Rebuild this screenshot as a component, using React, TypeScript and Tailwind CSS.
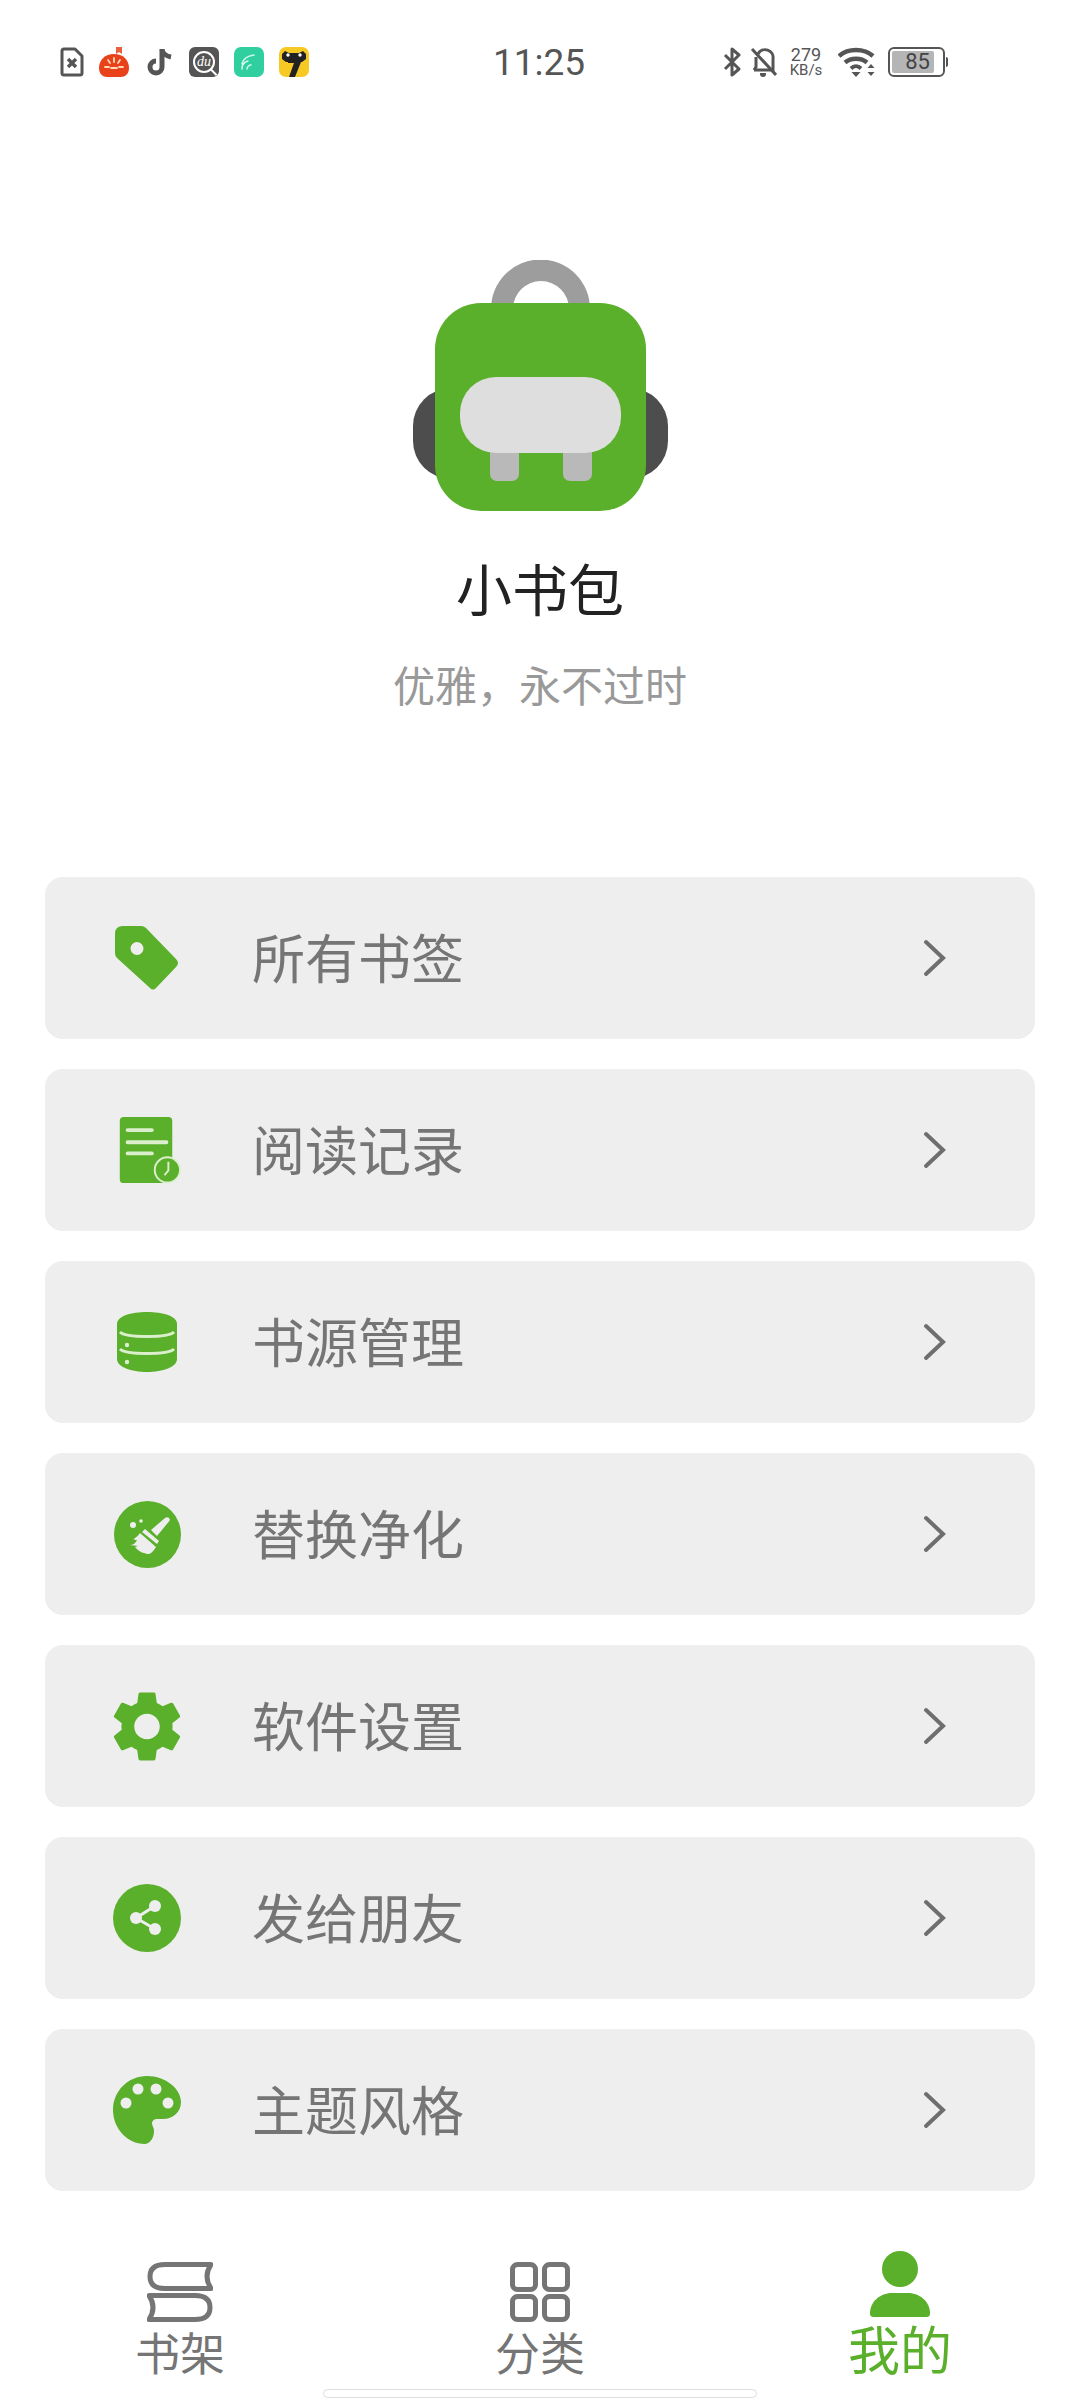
import type { ReactNode } from 'react'

const GREEN = '#5aaf2b'
const ROW = '#eeeeee'

function FileIcon() {
  return (
    <svg width="24" height="30" viewBox="0 0 24 30" fill="none">
      <path d="M2 4a2 2 0 0 1 2-2h11l7 7v17a2 2 0 0 1-2 2H4a2 2 0 0 1-2-2z" stroke="#555" strokeWidth="3" strokeLinejoin="round" />
      <path d="M8 12l8 8M16 12l-8 8" stroke="#555" strokeWidth="3.400" />
    </svg>
  )
}

function BunIcon() {
  return (
    <svg width="30" height="30" viewBox="0 0 30 30">
      <path d="M17 0h6v7l-3-2-3 2z" fill="#e8603c" />
      <path d="M15 7c9 0 15 6 15 14 0 6-4 9-8 9H8c-4 0-8-3-8-9C0 13 6 7 15 7z" fill="#e9421a" />
      <path d="M15 11v4M9 13l2 3M21 13l-2 3M6 20h4M20 20h4M12 21h6" stroke="#ffd9b8" strokeWidth="1.800" strokeLinecap="round" />
    </svg>
  )
}

function NoteIcon() {
  return (
    <svg width="26" height="30" viewBox="0 0 26 30" fill="none">
      <path d="M15 2v18a6 6 0 1 1-6-6" stroke="#555" strokeWidth="5" />
      <path d="M15 3c1 4 4 6 9 7" stroke="#555" strokeWidth="5" />
    </svg>
  )
}

function DuIcon() {
  return (
    <div className="relative flex h-[30px] w-[30px] items-center justify-center rounded-[6px] bg-[#555555]">
      <div className="flex h-[22px] w-[22px] items-center justify-center rounded-full border-2 border-white bg-[#555555]">
        <span className="text-[14px] italic leading-none text-white [font-family:'Liberation_Serif',serif]">du</span>
      </div>
      <div className="absolute bottom-[4px] right-[1px] h-[2px] w-[9px] rotate-45 bg-white" />
    </div>
  )
}

function SignalAppIcon() {
  return (
    <svg width="30" height="30" viewBox="0 0 30 30" fill="none">
      <rect width="30" height="30" rx="7" fill="#2fcf9f" />
      <path d="M8 22c0-4 2-7 6-8M8 17c1-5 5-8 12-9M13 22c0-2 2-4 4-4" stroke="#d6f7ec" strokeWidth="1.500" strokeLinecap="round" />
    </svg>
  )
}

function CatAppIcon() {
  return (
    <svg width="30" height="30" viewBox="0 0 30 30">
      <rect width="30" height="30" rx="7" fill="#f7c924" />
      <path d="M3 7l3-3 4 2h10l4-2 3 3v5l-4 3H7l-4-3z" fill="#222" />
      <path d="M9 10h15l-8 20h-6l5-14H9z" fill="#222" />
      <circle cx="9" cy="8" r="1.700" fill="#fff" />
      <circle cx="21" cy="8" r="1.700" fill="#fff" />
    </svg>
  )
}

function Bluetooth() {
  return (
    <svg width="19" height="30" viewBox="0 0 19 30" fill="none">
      <path d="M2 8l14 14-7 6V2l7 6L2 22" stroke="#555" strokeWidth="3" strokeLinejoin="round" />
    </svg>
  )
}

function BellOff() {
  return (
    <svg width="27" height="30" viewBox="0 0 27 30" fill="none">
      <path d="M8 7a8 8 0 0 1 15 5v11H4h15" stroke="#555" strokeWidth="3" />
      <path d="M2 2l24 26" stroke="#555" strokeWidth="3" />
      <path d="M10 26h6v1a3 3 0 0 1-6 0z" fill="#555" />
      <path d="M6 10v10l-2 3" stroke="#555" strokeWidth="3" />
    </svg>
  )
}

function Wifi() {
  return (
    <svg width="39" height="30" viewBox="0 0 39 30" fill="none">
      <path d="M1 9c9-8 25-8 34 0" stroke="#555" strokeWidth="4.500" />
      <path d="M7 15.500c6-5 16-5 22 0" stroke="#555" strokeWidth="4.500" />
      <path d="M13 21.500c3-3 7-3 10 0" stroke="#555" strokeWidth="4" />
      <path d="M13.500 25h9l-4.500 5z" fill="#555" />
      <path d="M33 17l3.500 4h-7zM33 29l3.500-4h-7z" fill="#555" />
    </svg>
  )
}

function Battery() {
  return (
    <div className="flex items-center">
      <div className="relative h-[30px] w-[57px] rounded-[6px] border-[2px] border-[#555555] p-[2px]">
        <div className="h-full w-[42px] rounded-[2px] bg-[#b5b5b5]" />
        <span className="absolute inset-0 flex items-center justify-center pl-[2px] text-[22px] leading-none text-[#444444] [font-family:Roboto,sans-serif]">85</span>
      </div>
      <div className="ml-[1px] h-[10px] w-[2px] rounded-r-sm bg-[#555555]" />
    </div>
  )
}

function StatusBar() {
  return (
    <div className="flex h-[124px] items-center pl-[60px] [font-family:Roboto,sans-serif]">
      <div className="flex w-[433px] items-center">
        <div className="mr-[15px]"><FileIcon /></div>
        <div className="mr-[18px]"><BunIcon /></div>
        <div className="mr-[16px]"><NoteIcon /></div>
        <div className="mr-[15px]"><DuIcon /></div>
        <div className="mr-[15px]"><SignalAppIcon /></div>
        <CatAppIcon />
      </div>
      <div className="w-[230px] text-[37px] leading-none text-[#555555]">11:25</div>
      <div className="flex items-center">
        <div className="mr-[8px]"><Bluetooth /></div>
        <div className="mr-[12px]"><BellOff /></div>
        <div className="mr-[15px] flex w-[34px] flex-col items-center text-[#555555]">
          <span className="text-[18px] leading-[17px]">279</span>
          <span className="text-[15px] leading-[15px]">KB/s</span>
        </div>
        <div className="mr-[11px]"><Wifi /></div>
        <Battery />
      </div>
    </div>
  )
}

function BagLogo() {
  return (
    <svg width="255" height="251" viewBox="412 260 255 251" className="mx-auto block">
      <rect x="412" y="388" width="255" height="91" rx="38" fill="#4d4d4d" />
      <path d="M490 310v-1a49.500 49.500 0 0 1 99 0v1h-21v-1a28 28 0 0 0-56 0v1z" fill="#9d9d9d" />
      <rect x="434" y="303" width="211" height="208" rx="46" fill={GREEN} />
      <rect x="489" y="440" width="29" height="41" rx="7" fill="#b9b9b9" />
      <rect x="562" y="440" width="29" height="41" rx="7" fill="#b9b9b9" />
      <rect x="459" y="377" width="161" height="76" rx="36" fill="#dedede" />
    </svg>
  )
}

function TagIcon() {
  return (
    <svg width="64" height="65" viewBox="0 0 64 65">
      <path d="M8 0H26Q29 0 31 2L61 33Q65 37 61 41L41 62Q38 65 35 62L2 32Q0 30 0 27V8Q0 0 8 0Z" fill={GREEN} />
      <ellipse cx="22" cy="22.500" rx="6.500" ry="6.500" fill={ROW} />
    </svg>
  )
}

function RecordIcon() {
  return (
    <svg width="70" height="68" viewBox="-7 0 70 68">
      <rect x="0" y="0" width="54" height="68" rx="4" fill={GREEN} />
      <path d="M8 13.500H33M8 26H48M8 37.500H33" stroke="#dcefcd" strokeWidth="4" strokeLinecap="round" />
      <circle cx="49" cy="54.500" r="13" fill={GREEN} stroke="#dcefcd" strokeWidth="2" />
      <path d="M50 46v9l-4 5" stroke="#dcefcd" strokeWidth="2" fill="none" />
    </svg>
  )
}

function DatabaseIcon() {
  return (
    <svg width="60" height="60" viewBox="0 0 60 60">
      <path d="M0 12C0 4 14 0 30 0s30 4 30 12v35c0 8-14 13-30 13S0 55 0 47z" fill={GREEN} />
      <path d="M3 20c6 6 48 6 54 0M3 37c6 6 48 6 54 0" stroke="#dcefcd" strokeWidth="3" fill="none" />
      <circle cx="10" cy="33" r="2.200" fill="#dcefcd" />
      <circle cx="10" cy="50" r="2.200" fill="#dcefcd" />
    </svg>
  )
}

function BrushIcon() {
  return (
    <svg width="67" height="67" viewBox="0 0 67 67">
      <circle cx="33.500" cy="33.500" r="33.500" fill={GREEN} />
      <path d="M37 29l14-12c1.500-1 3-1 4 0s1 3-.5 4L43 35z" fill={ROW} />
      <path d="M31 28l14 12-2 3-15-12z" fill={ROW} />
      <path d="M26 32l16 14c-2 3-4 6-7 7-4 0-10-2-14-7l3-1-8-1c3 0 6-2 7-5-1 0-2 0-4-1 1 0 4-2 7-6z" fill={ROW} />
      <circle cx="19" cy="24" r="3" fill={ROW} />
      <circle cx="27" cy="20" r="1.800" fill={ROW} />
    </svg>
  )
}

function GearIcon() {
  return (
    <svg width="68" height="71" viewBox="2.600 2 18.800 20">
      <path
        fillRule="evenodd"
        fill={GREEN}
        d="M19.140 12.940c.04-.3.06-.61.06-.94 0-.32-.02-.64-.07-.94l2.030-1.580c.18-.14.23-.41.12-.61l-1.920-3.320c-.12-.22-.37-.29-.59-.22l-2.390.96c-.5-.38-1.030-.7-1.620-.94l-.36-2.540c-.04-.24-.24-.41-.48-.41h-3.840c-.24 0-.43.17-.47.41l-.36 2.540c-.59.24-1.130.57-1.620.94l-2.390-.96c-.22-.08-.47 0-.59.22L2.740 8.870c-.12.21-.08.47.12.61l2.030 1.580c-.05.3-.09.63-.09.94s.02.64.07.94l-2.030 1.580c-.18.14-.23.41-.12.61l1.920 3.320c.12.22.37.29.59.22l2.390-.96c.5.38 1.030.7 1.620.94l.36 2.540c.05.24.24.41.48.41h3.840c.24 0 .44-.17.47-.41l.36-2.540c.59-.24 1.130-.56 1.620-.94l2.390.96c.22.08.47 0 .59-.22l1.920-3.320c.12-.22.07-.47-.12-.61l-2.010-1.580zM12 15.600c-1.980 0-3.600-1.620-3.600-3.600s1.620-3.600 3.600-3.600 3.600 1.620 3.600 3.600-1.620 3.600-3.600 3.600z"
      />
    </svg>
  )
}

function ShareIcon() {
  return (
    <svg width="68" height="68" viewBox="0 0 68 68">
      <circle cx="34" cy="34" r="34" fill={GREEN} />
      <path d="M42 22L23 34l19 11" stroke={ROW} strokeWidth="3" fill="none" />
      <circle cx="42" cy="22" r="6" fill={ROW} />
      <circle cx="23" cy="34" r="6" fill={ROW} />
      <circle cx="42" cy="45" r="6" fill={ROW} />
    </svg>
  )
}

function PaletteIcon() {
  return (
    <svg width="68" height="68" viewBox="0 0 68 68">
      <path d="M34 0C53 0 68 13 68 26c0 10-8 17-18 17h-6c-3 0-5 2-5 4 0 3 2 4 2 8 0 6-3 12-9 13C14 68 0 52 0 34 0 15 15 0 34 0z" fill={GREEN} />
      <circle cx="13" cy="27" r="5.500" fill={ROW} />
      <circle cx="25" cy="13" r="5.500" fill={ROW} />
      <circle cx="43" cy="13" r="5.500" fill={ROW} />
      <circle cx="55" cy="27" r="5.500" fill={ROW} />
    </svg>
  )
}

const rows: { label: string; icon: ReactNode }[] = [
  { label: '所有书签', icon: <TagIcon /> },
  { label: '阅读记录', icon: <RecordIcon /> },
  { label: '书源管理', icon: <DatabaseIcon /> },
  { label: '替换净化', icon: <BrushIcon /> },
  { label: '软件设置', icon: <GearIcon /> },
  { label: '发给朋友', icon: <ShareIcon /> },
  { label: '主题风格', icon: <PaletteIcon /> },
]

function MenuRow({ label, icon }: { label: string; icon: ReactNode }) {
  return (
    <div className="flex h-[162px] items-center rounded-[18px] bg-[#eeeeee] pl-[68px] pr-[88px]">
      <div className="flex w-[68px] justify-center">{icon}</div>
      <span className="ml-[71px] flex-1 pb-[3px] text-[53px] leading-none text-[#757575]">{label}</span>
      <svg width="24" height="38" viewBox="0 0 24 38" fill="none">
        <path d="M3 3l17 16L3 35" stroke="#6e6e6e" strokeWidth="4" strokeLinecap="round" strokeLinejoin="miter" />
      </svg>
    </div>
  )
}

function ShelfIcon() {
  return (
    <svg width="66" height="60" viewBox="0 0 66 60" fill="none">
      <path d="M64 2.500H18Q3 2.500 3 14.500Q3 26.500 18 26.500H64Q56 14.500 64 2.500Z" stroke="#757575" strokeWidth="5" strokeLinejoin="round" />
      <path d="M2 33.500H48Q63 33.500 63 45.500Q63 57.500 48 57.500H2Q10 45.500 2 33.500Z" stroke="#757575" strokeWidth="5" strokeLinejoin="round" />
    </svg>
  )
}

function GridIcon() {
  return (
    <svg width="60" height="60" viewBox="0 0 60 60" fill="none">
      <rect x="2.500" y="2.500" width="23" height="25" rx="5" stroke="#757575" strokeWidth="5" />
      <rect x="34.500" y="2.500" width="23" height="25" rx="5" stroke="#757575" strokeWidth="5" />
      <rect x="2.500" y="34.500" width="23" height="23" rx="5" stroke="#757575" strokeWidth="5" />
      <rect x="34.500" y="34.500" width="23" height="23" rx="5" stroke="#757575" strokeWidth="5" />
    </svg>
  )
}

function PersonIcon() {
  return (
    <svg width="60" height="66" viewBox="0 0 60 66">
      <ellipse cx="30" cy="18" rx="18" ry="18" fill={GREEN} />
      <path d="M0 62C0 51 10 42 22 42h16c12 0 22 9 22 20 0 3-1 4-4 4H4c-3 0-4-1-4-4z" fill={GREEN} />
    </svg>
  )
}

function BottomNav() {
  return (
    <div className="mt-[60px] grid h-[128px] grid-cols-3">
      <div className="flex flex-col items-center justify-end pb-[3px]">
        <ShelfIcon />
        <span className="mt-[6px] text-[45px] leading-[48px] text-[#757575]">书架</span>
      </div>
      <div className="flex flex-col items-center justify-end pb-[3px]">
        <GridIcon />
        <span className="mt-[6px] text-[45px] leading-[48px] text-[#757575]">分类</span>
      </div>
      <div className="flex flex-col items-center justify-end pb-[4px]">
        <PersonIcon />
        <span className="mt-[4px] text-[52px] leading-[54px] text-[#5aaf2b]">我的</span>
      </div>
    </div>
  )
}

export default function App() {
  return (
    <div className="h-[2400px] w-[1080px] overflow-hidden bg-white [font-family:'Noto_Sans_CJK_SC',sans-serif]">
      <StatusBar />
      <div className="mt-[136px]">
        <BagLogo />
      </div>
      <div className="mt-[48px] text-center text-[56px] leading-[56px] text-[#222222]">小书包</div>
      <div className="mt-[48px] text-center text-[42px] leading-[42px] text-[#999999]">优雅，永不过时</div>
      <div className="mx-[45px] mt-[172px] flex flex-col gap-[30px]">
        {rows.map((r) => (
          <MenuRow key={r.label} label={r.label} icon={r.icon} />
        ))}
      </div>
      <BottomNav />
      <div className="mx-auto mt-[10px] h-[9px] w-[434px] rounded-full border border-[#dddddd] bg-white" />
    </div>
  )
}
